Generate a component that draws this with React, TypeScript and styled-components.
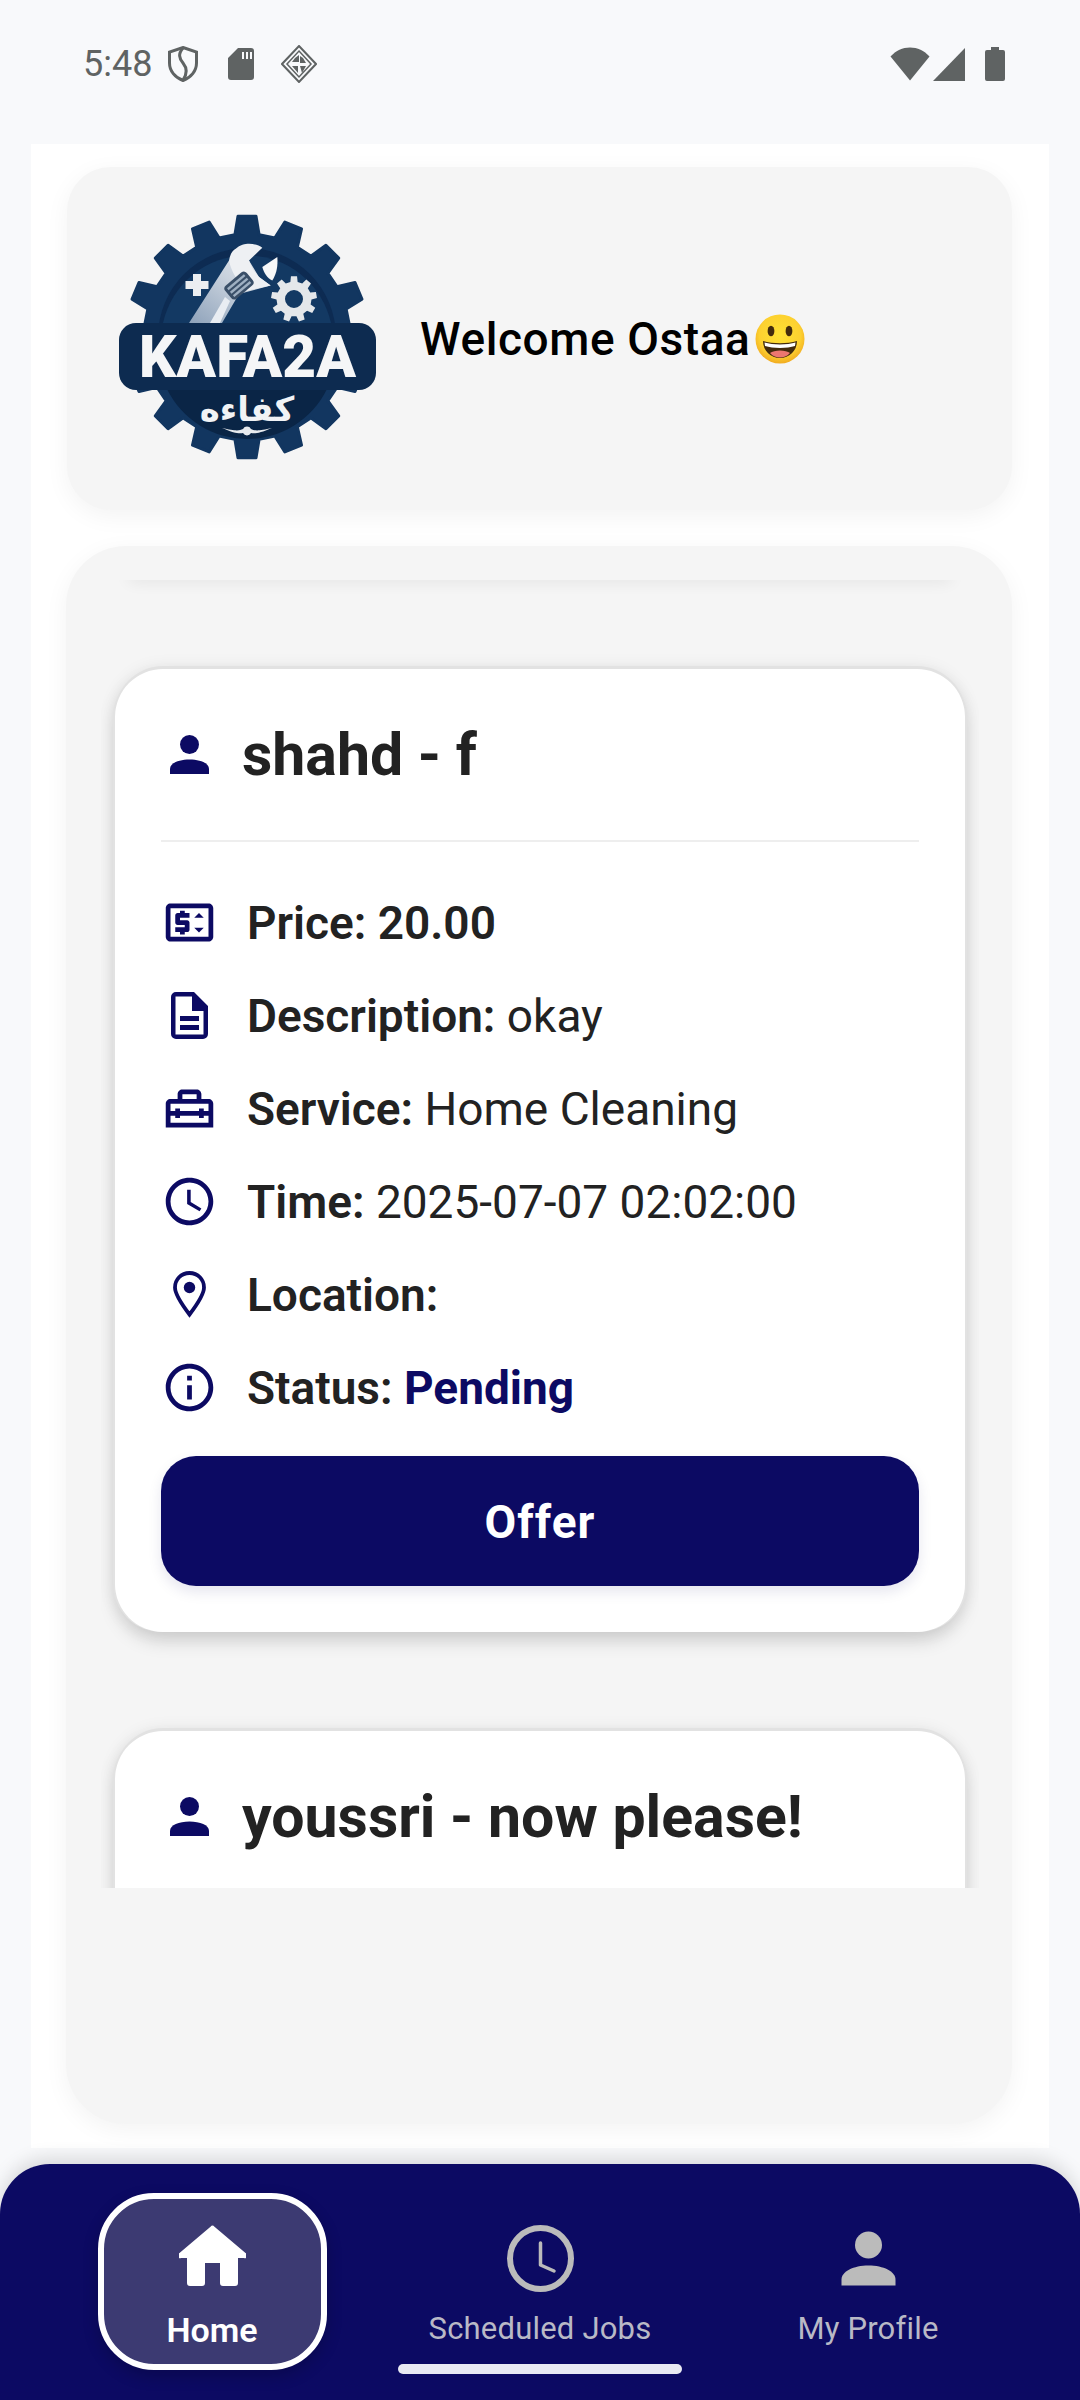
import React from "react";
import styled, { createGlobalStyle } from "styled-components";
import {
  MdOutlinePriceChange,
  MdOutlineHomeRepairService,
  MdOutlineAccessTime,
  MdInfoOutline,
} from "react-icons/md";

const NAVY = "#0c0a63";

const Global = createGlobalStyle`
  html, body { margin: 0; padding: 0; background: #f8f9fb; }
  body { font-family: Roboto, "Liberation Sans", sans-serif; }
  * { box-sizing: border-box; }
`;

const Page = styled.div`
  width: 1080px;
  height: 2400px;
  display: flex;
  flex-direction: column;
  background: #f8f9fb;
  overflow: hidden;
`;

const StatusBar = styled.div`
  height: 144px;
  flex: none;
  display: flex;
  align-items: center;
  justify-content: space-between;
  padding: 0 75px 16px 83px;
`;

const StatusGroup = styled.div`
  display: flex;
  align-items: center;
`;

const Time = styled.span`
  font-size: 36px;
  line-height: 40px;
  color: #5f6363;
  width: 85px;
`;

const StatusIcon = styled.svg<{ $gap?: number }>`
  display: block;
  flex: none;
  margin-right: ${(p) => p.$gap ?? 0}px;
  color: #5f6363;
`;

const Main = styled.main`
  height: 2004px;
  flex: none;
  margin: 0 31px 0;
  padding: 23px 37px 0 36px;
  background: #fff;
`;

const HeaderCard = styled.section`
  height: 343px;
  display: flex;
  align-items: center;
  gap: 43px;
  padding-left: 50px;
  background: #f5f5f5;
  border-radius: 44px;
  box-shadow: 0 6px 24px rgba(0, 0, 0, 0.05);
`;

const Logo = styled.svg`
  width: 260px;
  height: 260px;
  flex: none;
`;

const Welcome = styled.h1`
  margin: 0;
  display: flex;
  align-items: center;
  gap: 4px;
  font-size: 46px;
  font-weight: 500;
  letter-spacing: 0.6px;
  color: #000;
`;

const Emoji = styled.svg`
  width: 50px;
  height: 50px;
  flex: none;
`;

const ListCard = styled.section`
  height: 1578px;
  margin-top: 36px;
  margin-left: -1px;
  padding: 34px 33px 0 35px;
  background: #f5f5f5;
  border-radius: 60px;
  box-shadow: 0 6px 24px rgba(0, 0, 0, 0.05);
`;

const ScrollClip = styled.div`
  height: 1308px;
  overflow: hidden;
  background: #f5f5f5;
`;

const TopFade = styled.div`
  height: 10px;
  margin: -10px 28px 0;
  box-shadow: 0 1px 16px rgba(0, 0, 0, 0.09);
`;

const JobCard = styled.article`
  margin: 89px 14px 0 14px;
  padding: 51px 46px 46px;
  height: 963px;
  background: #fff;
  border-radius: 48px;
  box-shadow: 0 -3px 0 #e2e2e2, -2px 0 0 #e2e2e2, 2px 0 0 #e2e2e2,
    0 10px 18px rgba(0, 0, 0, 0.13), 0 0 18px rgba(0, 0, 0, 0.09);

  & + & {
    margin-top: 99px;
  }
`;

const TitleRow = styled.div`
  height: 68px;
  display: flex;
  align-items: center;
`;

const PersonSlot = styled.span`
  margin-left: 9px;
  margin-right: 33px;
  display: flex;
  color: ${NAVY};
`;

const Title = styled.h2`
  margin: 2px 0 0;
  font-size: 59px;
  line-height: 68px;
  font-weight: 700;
  color: #222;
  white-space: nowrap;
`;

const Divider = styled.hr`
  height: 2px;
  margin: 52px 0 34px;
  border: 0;
  background: #eee;
`;

const InfoRow = styled.div`
  height: 93px;
  display: flex;
  align-items: center;
  gap: 34px;
  padding-left: 4px;
  color: ${NAVY};
`;

const IconSlot = styled.span`
  width: 48px;
  height: 57px;
  flex: none;
  display: flex;
  align-items: center;
  justify-content: center;
  font-size: 57px;

  svg {
    display: block;
    flex: none;
  }
`;

const InfoText = styled.p`
  margin: 0;
  font-size: 46px;
  line-height: 56px;
  color: #222;
  white-space: nowrap;
`;

const Label = styled.strong`
  font-weight: 600;
`;

const Pending = styled.strong`
  font-weight: 700;
  color: ${NAVY};
`;

const OfferButton = styled.button`
  display: block;
  width: 100%;
  height: 130px;
  margin-top: 22px;
  padding: 2px 0 0;
  border: 0;
  border-radius: 35px;
  background: ${NAVY};
  color: #fff;
  font-family: inherit;
  font-size: 46px;
  font-weight: 700;
  letter-spacing: 1px;
  box-shadow: 0 6px 14px rgba(11, 10, 99, 0.1);
`;

const TabBar = styled.nav`
  position: relative;
  z-index: 2;
  height: 236px;
  flex: none;
  margin-top: 16px;
  padding: 29px 48px 0;
  display: grid;
  grid-template-columns: repeat(3, 1fr);
  align-items: start;
  background: ${NAVY};
  border-radius: 50px 50px 0 0;
  box-shadow: 0 -6px 18px rgba(0, 0, 0, 0.13);
`;

const Tab = styled.div<{ $active?: boolean }>`
  justify-self: center;
  width: 229px;
  height: 177px;
  display: flex;
  flex-direction: column;
  align-items: center;
  padding-top: ${(p) => (p.$active ? 26 : 32)}px;
  border: ${(p) => (p.$active ? "6px solid #fff" : "0")};
  border-radius: 56px;
  background: ${(p) => (p.$active ? "#3c3a72" : "transparent")};
  box-shadow: ${(p) => (p.$active ? "0 6px 16px rgba(0,0,0,.2)" : "none")};
  color: ${(p) => (p.$active ? "#fff" : "#bbb")};
`;

const TabIcon = styled.svg`
  width: 67px;
  height: 67px;
  display: block;
  flex: none;
`;

const TabLabel = styled.span<{ $active?: boolean }>`
  margin-top: ${(p) => (p.$active ? 18 : 17)}px;
  font-size: ${(p) => (p.$active ? 34 : 31)}px;
  line-height: 40px;
  font-weight: ${(p) => (p.$active ? 600 : 400)};
  letter-spacing: ${(p) => (p.$active ? 0 : 0.2)}px;
  color: ${(p) => (p.$active ? "#fff" : "#b9b9c6")};
  white-space: nowrap;
`;

const HomeIndicator = styled.div`
  position: absolute;
  left: 398px;
  top: 200px;
  width: 284px;
  height: 10px;
  border-radius: 5px;
  background: #e9eaf3;
`;

function gearPath(cx: number, cy: number, rOut: number, rIn: number, teeth: number, phase = 0) {
  const pts: string[] = [];
  const step = (Math.PI * 2) / teeth;
  for (let i = 0; i < teeth; i++) {
    const a = phase + i * step;
    const at = (r: number, t: number) =>
      `${(cx + r * Math.sin(a + t * step)).toFixed(2)} ${(cy - r * Math.cos(a + t * step)).toFixed(2)}`;
    pts.push(at(rIn, -0.3), at(rOut, -0.19), at(rOut, 0.19), at(rIn, 0.3));
  }
  return `M${pts.join("L")}Z`;
}

const LogoMark = () => (
  <Logo viewBox="0 0 260 260" role="img" aria-label="KAFA2A">
    <defs>
      <linearGradient id="steel" x1="0" y1="1" x2="1" y2="0">
        <stop offset="0" stopColor="#8ea2ba" />
        <stop offset="0.6" stopColor="#c9d2dd" />
        <stop offset="1" stopColor="#e6eaef" />
      </linearGradient>
    </defs>
    <path d={gearPath(130, 128, 121, 103, 16)} fill="#123660" strokeLinejoin="round" stroke="#123660" strokeWidth="3" />
    <circle cx="130" cy="128" r="89" fill="#0d2b52" />
    <path d="M46 114 A86 86 0 0 1 214 114Z" fill="#133963" />
    <path d="M50 180 A89 89 0 0 0 210 180Z" fill="#0a2546" />
    {/* wrench */}
    <path d="M112 51.500 L72 114 L105 114 L122 85 L153.700 76.500 L142 68 L132 51.500 Z" fill="url(#steel)" />
    <path d="M112 51.500 C113 45 116 41 118.700 39.800 C123 36 128 34.800 132 34.800 C137 34.800 142 36 145.300 38.800 L132 51.500 C134 58 138 64 142 68 L153.700 76.500 C146 78 138 80 130 82 C120 72 114 62 112 51.500Z" fill="#eef0f3" />
    <path d="M145.300 58 L160.300 48 C161 56 160 64 155.300 71.500 C150 69 147 64 145.300 58Z" fill="#f7f8f9" />
    <path d="M93 114 L108 88 L113 92 L103 114Z" fill="#e9edf2" />
    <g transform="rotate(-40 122 76.500)">
      <rect x="108" y="68" width="28" height="17" rx="4" fill="#3a4f68" />
      <rect x="111" y="71" width="22" height="2.400" fill="#9fb0c2" />
      <rect x="111" y="75.500" width="22" height="2.400" fill="#9fb0c2" />
      <rect x="111" y="80" width="22" height="2.400" fill="#9fb0c2" />
    </g>
    {/* small gear */}
    <path fillRule="evenodd" d={gearPath(177, 90, 23, 17.500, 9) + " M186 90a9 9 0 1 0 -18 0a9 9 0 1 0 18 0Z"} fill="#e4e7ea" />
    {/* plus */}
    <path d="M76 65h8v7h7.500v8h-7.500v7h-8v-7h-7.500v-8h7.500z" fill="#eceef1" />
    {/* banner */}
    <rect x="2" y="114" width="257" height="67" rx="17" fill="#0d2b50" />
    <text x="130.500" y="168" textAnchor="middle" fontFamily="Roboto, 'Liberation Sans', sans-serif" fontWeight="900" fontSize="60" textLength="217" lengthAdjust="spacingAndGlyphs" fill="#f5f6f7">
      KAFA2A
    </text>
    <text x="130" y="212" textAnchor="middle" fontFamily="'DejaVu Sans', sans-serif" fontWeight="700" fontSize="34" fill="#f1f3f5">
      كفاءه
    </text>
    <path d="M105 219 C118 222 122 222 126 220 a4.500 4.500 0 0 1 8 0 C138 222 142 222 155 219 C143 224 138 225 134 224 a4.500 4.500 0 0 1 -8 0 C122 225 117 224 105 219Z" fill="#e7eaee" />
  </Logo>
);

const GrinEmoji = () => (
  <Emoji viewBox="0 0 50 50" role="img" aria-label="grinning face">
    <defs>
      <radialGradient id="face" cx="0.5" cy="0.42" r="0.6">
        <stop offset="0" stopColor="#fee133" />
        <stop offset="0.7" stopColor="#fdd130" />
        <stop offset="1" stopColor="#f0a71f" />
      </radialGradient>
    </defs>
    <circle cx="25" cy="25" r="24.500" fill="url(#face)" />
    <ellipse cx="16" cy="17" rx="3.400" ry="5.200" fill="#422b0d" />
    <ellipse cx="34" cy="17" rx="3.400" ry="5.200" fill="#422b0d" />
    <path d="M8 27 C18 30 32 30 42 27 C42 37 34 44 25 44 C16 44 8 37 8 27Z" fill="#422b0d" />
    <path d="M9.500 28.500 C18 31 32 31 40.500 28.500 L40 32 C32 34.500 18 34.500 10 32Z" fill="#fff" />
    <path d="M15 39 C19 35.500 31 35.500 35 39 C32 42.500 28.500 43.500 25 43.500 C21.500 43.500 18 42.500 15 39Z" fill="#ed7770" />
  </Emoji>
);

const PersonIcon = () => (
  <svg width="39" height="39" viewBox="0 0 39 39" fill="currentColor">
    <circle cx="19.500" cy="9.500" r="9.500" />
    <path d="M0 39V34C0 28 9 24.500 19.500 24.500S39 28 39 34V39Z" />
  </svg>
);

const DocIcon = () => (
  <svg width="37" height="47" viewBox="0 0 37 47" fill="currentColor">
    <path
      fillRule="evenodd"
      d="M5 0H23L37 14V42a5 5 0 0 1-5 5H5a5 5 0 0 1-5-5V5a5 5 0 0 1 5-5ZM4.500 4.500V42.500H32.500V19H21V4.500Z"
    />
    <rect x="9" y="24" width="19" height="5" />
    <rect x="9" y="33" width="19" height="5" />
  </svg>
);

const PinIcon = () => (
  <svg width="33" height="47" viewBox="0 0 33 47">
    <path
      d="M16.500 2C8 2 2 8.500 2 16.500C2 23.500 8.500 33 16.500 43.500C24.500 33 31 23.500 31 16.500C31 8.500 25 2 16.500 2Z"
      fill="none"
      stroke="currentColor"
      strokeWidth="3.800"
    />
    <circle cx="16.500" cy="16.500" r="5.700" fill="currentColor" />
  </svg>
);

type Row = { icon: React.ReactNode; label: string; value?: string; boldValue?: boolean; status?: boolean };

const rows: Row[] = [
  { icon: <MdOutlinePriceChange />, label: "Price:", value: "20.00", boldValue: true },
  { icon: <DocIcon />, label: "Description:", value: "okay" },
  { icon: <MdOutlineHomeRepairService />, label: "Service:", value: "Home Cleaning" },
  { icon: <MdOutlineAccessTime />, label: "Time:", value: "2025-07-07 02:02:00" },
  { icon: <PinIcon />, label: "Location:" },
  { icon: <MdInfoOutline />, label: "Status:", value: "Pending", status: true },
];

const CardTitle = ({ text }: { text: string }) => (
  <TitleRow>
    <PersonSlot>
      <PersonIcon />
    </PersonSlot>
    <Title>{text}</Title>
  </TitleRow>
);

export default function App() {
  return (
    <Page>
      <Global />
      <StatusBar>
        <StatusGroup>
          <Time>5:48</Time>
          <StatusIcon $gap={30} width="30" height="36" viewBox="0 0 30 36" fill="none" stroke="currentColor">
            <path d="M15 1.500L28.500 6V17C28.500 25 23 31.500 15 34.500C7 31.500 1.500 25 1.500 17V6Z" strokeWidth="3" />
            <path d="M15 2C10 8 11 12 15 17C19 22 20 27 15 34" strokeWidth="3" />
          </StatusIcon>
          <StatusIcon $gap={27} width="26" height="32" viewBox="0 0 26 32" fill="currentColor">
            <path fillRule="evenodd" d="M10 0H23a3 3 0 0 1 3 3V29a3 3 0 0 1-3 3H3a3 3 0 0 1-3-3V10ZM14 4V11H16V4ZM18 4V11H20V4ZM22 4V11H24V4Z" />
          </StatusIcon>
          <StatusIcon width="36" height="38" viewBox="0 0 36 38" fill="none" stroke="currentColor">
            <path d="M18 1L35 19L18 37L1 19Z" strokeWidth="2" />
            <path d="M18 6L30 19L18 32L6 19Z" strokeWidth="1.500" />
            <path d="M14 13L18 10V17H11ZM22 13L25 18H19V11ZM11 21H17V28ZM19 21H25L21 28Z" fill="currentColor" stroke="none" />
          </StatusIcon>
        </StatusGroup>
        <StatusGroup>
          <StatusIcon $gap={3} width="40" height="34" viewBox="0 0 40 34" fill="currentColor">
            <path d="M20 33.500L0.500 9.500C6 3.500 12.500 0.500 20 0.500S34 3.500 39.500 9.500Z" />
          </StatusIcon>
          <StatusIcon $gap={20} width="32" height="33" viewBox="0 0 32 33" fill="currentColor">
            <path d="M0 33L32 0V33Z" />
          </StatusIcon>
          <StatusIcon width="20" height="34" viewBox="0 0 20 34" fill="currentColor">
            <path d="M6 0H14V3H18a2 2 0 0 1 2 2V32a2 2 0 0 1-2 2H2a2 2 0 0 1-2-2V5a2 2 0 0 1 2-2H6Z" />
          </StatusIcon>
        </StatusGroup>
      </StatusBar>

      <Main>
        <HeaderCard>
          <LogoMark />
          <Welcome>
            Welcome Ostaa
            <GrinEmoji />
          </Welcome>
        </HeaderCard>

        <ListCard>
          <ScrollClip>
            <TopFade />
            <JobCard>
              <CardTitle text="shahd - f" />
              <Divider />
              {rows.map((r) => (
                <InfoRow key={r.label}>
                  <IconSlot>{r.icon}</IconSlot>
                  <InfoText>
                    <Label>{r.label}</Label>
                    {r.value ? " " : ""}
                    {r.status ? <Pending>{r.value}</Pending> : r.boldValue ? <Label>{r.value}</Label> : r.value}
                  </InfoText>
                </InfoRow>
              ))}
              <OfferButton>Offer</OfferButton>
            </JobCard>
            <JobCard>
              <CardTitle text="youssri - now please!" />
            </JobCard>
          </ScrollClip>
        </ListCard>
      </Main>

      <TabBar>
        <Tab $active>
          <TabIcon viewBox="0 0 67 67" fill="currentColor">
            <path d="M33.500 0.500a2 2 0 0 1 1.700 1L66.500 28a2.500 2.500 0 0 1-1.500 5H59V58a3 3 0 0 1-3 3H44a3 3 0 0 1-3-3V38H26V58a3 3 0 0 1-3 3H11a3 3 0 0 1-3-3V33H2a2.500 2.500 0 0 1-1.500-5L31.800 1.500a2 2 0 0 1 1.700-1Z" />
          </TabIcon>
          <TabLabel $active>Home</TabLabel>
        </Tab>
        <Tab>
          <TabIcon viewBox="0 0 67 67" fill="none" stroke="currentColor" strokeLinecap="round" strokeLinejoin="round">
            <circle cx="33.500" cy="33.500" r="30.500" strokeWidth="6" />
            <path d="M33.500 18V40L47 46" strokeWidth="3.500" />
          </TabIcon>
          <TabLabel>Scheduled Jobs</TabLabel>
        </Tab>
        <Tab>
          <TabIcon viewBox="-6.500 -6.500 67 67" fill="currentColor">
            <circle cx="27" cy="13.500" r="13.500" />
            <path d="M0 54V48C0 40 12 34 27 34S54 40 54 48V54Z" />
          </TabIcon>
          <TabLabel>My Profile</TabLabel>
        </Tab>
        <HomeIndicator />
      </TabBar>
    </Page>
  );
}
